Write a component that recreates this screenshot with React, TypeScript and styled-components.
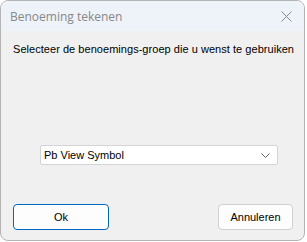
import React from 'react';
import styled, { createGlobalStyle } from 'styled-components';

const GlobalStyle = createGlobalStyle`
  html, body {
    margin: 0;
    padding: 0;
    background: #ffffff;
  }
  * {
    box-sizing: border-box;
  }
`;

const Window = styled.div`
  display: flex;
  flex-direction: column;
  width: 305px;
  height: 241px;
  border: 1px solid #b4b4b4;
  border-radius: 8px;
  overflow: hidden;
  background: #f0f0f0;
`;

const TitleBar = styled.div`
  display: flex;
  align-items: center;
  justify-content: space-between;
  height: 30px;
  padding: 0 11px 0 9px;
  background: #eef3f9;
  font-family: 'Open Sans', 'Noto Sans', sans-serif;
  font-size: 12px;
  color: #888888;
`;

const CloseButton = styled.div`
  display: flex;
  align-items: center;
  justify-content: center;
  width: 14px;
  height: 14px;
`;

const Body = styled.div`
  flex: 1;
  display: flex;
  flex-direction: column;
  padding: 12px 11px 10px 12px;
  font-family: 'Liberation Sans', Arial, sans-serif;
  font-size: 11px;
  color: #000000;
`;

const Prompt = styled.div`
  line-height: 13px;
  letter-spacing: 0.04px;
  white-space: nowrap;
`;

const SelectBox = styled.div`
  display: flex;
  align-items: center;
  justify-content: space-between;
  width: 238px;
  height: 20px;
  margin: 89px 0 0 27px;
  padding: 0 7px 0 3px;
  background: #ffffff;
  border: 1px solid #d4d4d4;
  border-radius: 2px;
  font-size: 11px;
`;

const ButtonRow = styled.div`
  display: flex;
  justify-content: space-between;
  margin-top: auto;
`;

const Button = styled.div<{ $primary?: boolean; $width: number }>`
  display: flex;
  align-items: center;
  justify-content: center;
  width: ${p => p.$width}px;
  height: 26px;
  background: #fdfdfd;
  border: 1px solid ${p => (p.$primary ? '#0067c0' : '#d0d0d0')};
  box-shadow: ${p => (p.$primary ? 'inset 0 0 0 1px #ffffff' : 'none')};
  border-radius: 4px;
  font-size: 11px;
`;

export default function App() {
  return (
    <>
      <GlobalStyle />
      <Window>
        <TitleBar>
          <span>Benoeming tekenen</span>
          <CloseButton>
            <svg width="11" height="11" viewBox="0 0 11 11">
              <path d="M0.5 0.5 L10.5 10.5 M10.5 0.5 L0.5 10.5" stroke="#8a8a8a" strokeWidth="1" fill="none" />
            </svg>
          </CloseButton>
        </TitleBar>
        <Body>
          <Prompt>Selecteer de benoemings-groep die u wenst te gebruiken</Prompt>
          <SelectBox>
            <span>Pb View Symbol</span>
            <svg width="9" height="5" viewBox="0 0 9 5">
              <path d="M0.5 0.5 L4.5 4.5 L8.5 0.5" stroke="#606060" strokeWidth="1" fill="none" />
            </svg>
          </SelectBox>
          <ButtonRow>
            <Button $primary $width={96}>Ok</Button>
            <Button $width={75}>Annuleren</Button>
          </ButtonRow>
        </Body>
      </Window>
    </>
  );
}
